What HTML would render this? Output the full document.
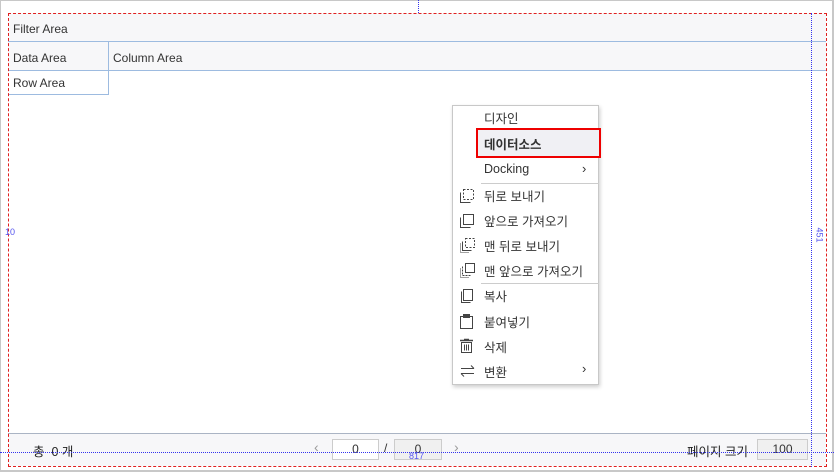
<!DOCTYPE html>
<html><head><meta charset="utf-8"><style>
*{box-sizing:border-box;margin:0;padding:0}
body{width:834px;height:472px;position:relative;background:#fff;font-family:"Liberation Sans","Noto Sans CJK KR",sans-serif;font-size:12px;color:#333;overflow:hidden}
.abs{position:absolute}
.menu{left:452px;top:105px;width:147px;height:280px;background:#fff;border:1px solid #c8c8c8;box-shadow:1px 2px 4px rgba(0,0,0,.2)}
.mi{position:absolute;left:31px;font-size:12.5px;color:#333}
.ico{position:absolute;left:6px}
</style></head><body>
<div class="abs" style="left:0;top:0;width:834px;height:472px;border:1px solid #c8c8c8;border-right:2px solid #c8c8c8;border-bottom:2px solid #c8c8c8"></div>
<div class="abs" style="left:8px;top:13px;width:818px;height:29px;background:#f7f7f9;border-bottom:1px solid #9dbbe0;padding:9px 0 0 5px">Filter Area</div>
<div class="abs" style="left:8px;top:42px;width:818px;height:29px;background:#f7f7f9;border-bottom:1px solid #9dbbe0"></div>
<div class="abs" style="left:13px;top:51px">Data Area</div>
<div class="abs" style="left:108px;top:42px;width:1px;height:53px;background:#9dbbe0"></div>
<div class="abs" style="left:113px;top:51px">Column Area</div>
<div class="abs" style="left:8px;top:71px;width:101px;height:24px;border-bottom:1px solid #9dbbe0;border-right:1px solid #9dbbe0;padding:5px 0 0 5px">Row Area</div>
<div class="abs" style="left:8px;top:433px;width:818px;height:33px;background:#f7f7f9;border-top:1px solid #aab4c4"></div>
<div class="abs" style="left:33px;top:441px;font-size:12.5px;color:#222">총 &nbsp;0 개</div>
<div class="abs" style="left:314px;top:439px;color:#999;font-size:14px">‹</div>
<div class="abs" style="left:332px;top:439px;width:47px;height:21px;background:#fff;border:1px solid #ccc;text-align:center;line-height:19px">0</div>
<div class="abs" style="left:384px;top:441px">/</div>
<div class="abs" style="left:394px;top:439px;width:48px;height:21px;background:#f0f0f0;border:1px solid #ccc;text-align:center;line-height:19px">0</div>
<div class="abs" style="left:454px;top:439px;color:#999;font-size:14px">›</div>
<div class="abs" style="left:687px;top:441px;font-size:12.5px;color:#222">페이지 크기</div>
<div class="abs" style="left:757px;top:439px;width:51px;height:21px;background:#f0f0f0;border:1px solid #ccc;text-align:center;line-height:19px">100</div>
<div class="abs" style="left:8px;top:13px;width:819px;height:454px;border:1px dashed #e02020"></div>
<div class="abs" style="left:418px;top:0;height:13px;border-left:1px dotted #3333ee"></div>
<div class="abs" style="left:811px;top:13px;height:454px;border-left:1px dotted #3333ee"></div>
<div class="abs" style="left:0;top:452px;width:834px;border-top:1px dotted #3333ee"></div>
<div class="abs" style="left:5px;top:227px;font-size:9px;color:#5555ee">10</div>
<div class="abs" style="left:409px;top:451px;font-size:9px;color:#5555ee">817</div>
<div class="abs" style="left:812px;top:230px;font-size:9px;color:#5555ee;transform:rotate(90deg)">451</div>
<div class="abs menu">
<div class="mi" style="top:2px">디자인</div>
<div class="abs" style="left:23px;top:22px;width:125px;height:30px;border:2px solid #e00;background:#f0f0f4"></div>
<div class="mi" style="top:28px;font-weight:bold">데이터소스</div>
<div class="mi" style="top:56px">Docking</div><div class="abs" style="left:129px;top:55px;font-size:13px">›</div>
<div class="abs" style="left:28px;top:77px;width:118px;height:1px;background:#ccc"></div>
<svg class="ico" style="top:82px" width="16" height="16"><path d="M4.5 1.5h10v10h-10z" fill="none" stroke="#444" stroke-dasharray="2 1.5"/><path d="M1.5 4.5v10h10" fill="none" stroke="#444"/></svg>
<div class="mi" style="top:80px">뒤로 보내기</div>
<svg class="ico" style="top:107px" width="16" height="16"><path d="M4.5 1.5h10v10h-10z" fill="none" stroke="#444"/><path d="M1.5 4.5v10h10" fill="none" stroke="#444"/></svg>
<div class="mi" style="top:105px">앞으로 가져오기</div>
<svg class="ico" style="top:131px" width="17" height="17"><path d="M6.5 1.5h9v9h-9z" fill="none" stroke="#444" stroke-dasharray="2 1.5"/><path d="M3.5 4.5v9h9" fill="none" stroke="#444"/><path d="M1.5 6.5v9h9" fill="none" stroke="#444" stroke-dasharray="1 1"/></svg>
<div class="mi" style="top:130px">맨 뒤로 보내기</div>
<svg class="ico" style="top:156px" width="17" height="17"><path d="M6.5 1.5h9v9h-9z" fill="none" stroke="#444"/><path d="M3.5 4.5v9h9" fill="none" stroke="#444" stroke-dasharray="2 1"/><path d="M1.5 6.5v9h9" fill="none" stroke="#444" stroke-dasharray="1 1"/></svg>
<div class="mi" style="top:155px">맨 앞으로 가져오기</div>
<div class="abs" style="left:28px;top:177px;width:118px;height:1px;background:#ccc"></div>
<svg class="ico" style="top:182px" width="16" height="16"><path d="M4.5 1.5h9v11h-9z" fill="none" stroke="#444"/><path d="M2.5 3.5v11h9" fill="none" stroke="#444"/></svg>
<div class="mi" style="top:180px">복사</div>
<svg class="ico" style="top:207px" width="16" height="17"><path d="M1.5 3.5h12v12h-12z" fill="none" stroke="#444"/><path d="M4.5 1.5h6v3h-6z" fill="#444" stroke="#444"/></svg>
<div class="mi" style="top:206px">붙여넣기</div>
<svg class="ico" style="top:232px" width="16" height="16"><path d="M1 2.5h13M5 1.5h5" stroke="#444" stroke-width="1.5"/><path d="M2.5 4.5h10v10h-10zM5.5 6.5v6M7.5 6.5v6M9.5 6.5v6" fill="none" stroke="#444"/></svg>
<div class="mi" style="top:231px">삭제</div>
<svg class="ico" style="top:257px" width="17" height="16"><path d="M2 5.5h13M12 2.5l3 3M2 10.5h13M5 13.5l-3-3" fill="none" stroke="#444"/></svg>
<div class="mi" style="top:256px">변환</div><div class="abs" style="left:129px;top:255px;font-size:13px">›</div>
</div>
</body></html>
